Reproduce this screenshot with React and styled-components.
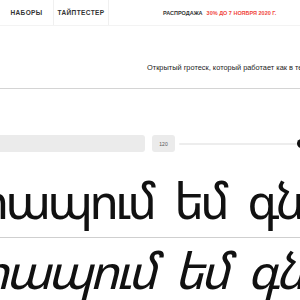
import React from 'react';
import styled, { createGlobalStyle } from 'styled-components';

const GlobalStyle = createGlobalStyle`
  html, body {
    margin: 0;
    background: #fff;
    overflow: hidden;
  }
  body {
    font-family: "Liberation Sans", Arial, sans-serif;
    color: #222;
  }
`;

const Page = styled.div`
  width: 300px;
  overflow: hidden;
`;

const Header = styled.header`
  display: flex;
  align-items: stretch;
  height: 25px;
  border-bottom: 1px solid #f3f3f3;
`;

const Tab = styled.a`
  display: flex;
  align-items: center;
  justify-content: center;
  width: ${({ $width }) => $width}px;
  border-right: 1px solid #f0f0f0;
  font-size: 6.5px;
  font-weight: 700;
  letter-spacing: 0.4px;
  color: #333;
  text-transform: uppercase;
`;

const Sale = styled.div`
  display: flex;
  align-items: center;
  margin-left: 54px;
  font-size: 5.5px;
  font-weight: 700;
  white-space: nowrap;
  color: #333;

  span {
    color: #f0463c;
    margin-left: 4px;
  }
`;

const Intro = styled.section`
  display: flex;
  align-items: flex-end;
  height: 46px;
  padding: 0 0 16px 147px;
  border-bottom: 1px solid #d4d4d4;
  font-size: 7.4px;
  white-space: nowrap;
  color: #222;
`;

const Controls = styled.div`
  display: flex;
  align-items: center;
  height: 17px;
  margin-top: 46px;
`;

const TextInput = styled.div`
  width: 145px;
  height: 17px;
  background: #ebebeb;
  border-radius: 0 3px 3px 0;
`;

const SizeBox = styled.div`
  display: flex;
  align-items: center;
  justify-content: center;
  width: 23px;
  height: 17px;
  margin-left: 7px;
  background: #ebebeb;
  border-radius: 3px;
  font-size: 5px;
  color: #555;
`;

const Slider = styled.div`
  position: relative;
  flex: 1;
  height: 2px;
  margin-left: 4px;
  background: #ededed;
  border-radius: 1px;
`;

const Knob = styled.span`
  position: absolute;
  right: -6px;
  top: -3.5px;
  width: 9px;
  height: 9px;
  border-radius: 50%;
  background: #111;
`;

const Sample = styled.div`
  margin-left: -66px;
  padding: ${({ $pad }) => $pad};
  border-bottom: ${({ $divided }) => ($divided ? '1px solid #cfcfcf' : 'none')};
  font-family: "Noto Sans Armenian", "Noto Sans", sans-serif;
  font-size: 50px;
  letter-spacing: -4px;
  word-spacing: 12px;
  line-height: 60px;
  font-style: ${({ $italic }) => ($italic ? 'italic' : 'normal')};
  white-space: nowrap;
  color: #111;
`;

const SampleWrap = styled.div`
  margin-top: 18px;
`;

export default function App() {
  return (
    <Page>
      <GlobalStyle />
      <Header>
        <Tab $width={53}>Наборы</Tab>
        <Tab $width={54}>Тайптестер</Tab>
        <Sale>
          РАСПРОДАЖА<span>30% ДО 7 НОЯБРЯ 2020 Г.</span>
        </Sale>
      </Header>
      <Intro>Открытый гротеск, который работает как в тексте, так и в заголовках.</Intro>
      <Controls>
        <TextInput />
        <SizeBox>120</SizeBox>
        <Slider>
          <Knob />
        </Slider>
      </Controls>
      <SampleWrap>
        <Sample $divided $pad="0 0 7px 0">Շտապում եմ գնալ տուն</Sample>
        <Sample $italic $pad="2px 0 0 0">Շտապում եմ գնալ տուն</Sample>
      </SampleWrap>
    </Page>
  );
}
